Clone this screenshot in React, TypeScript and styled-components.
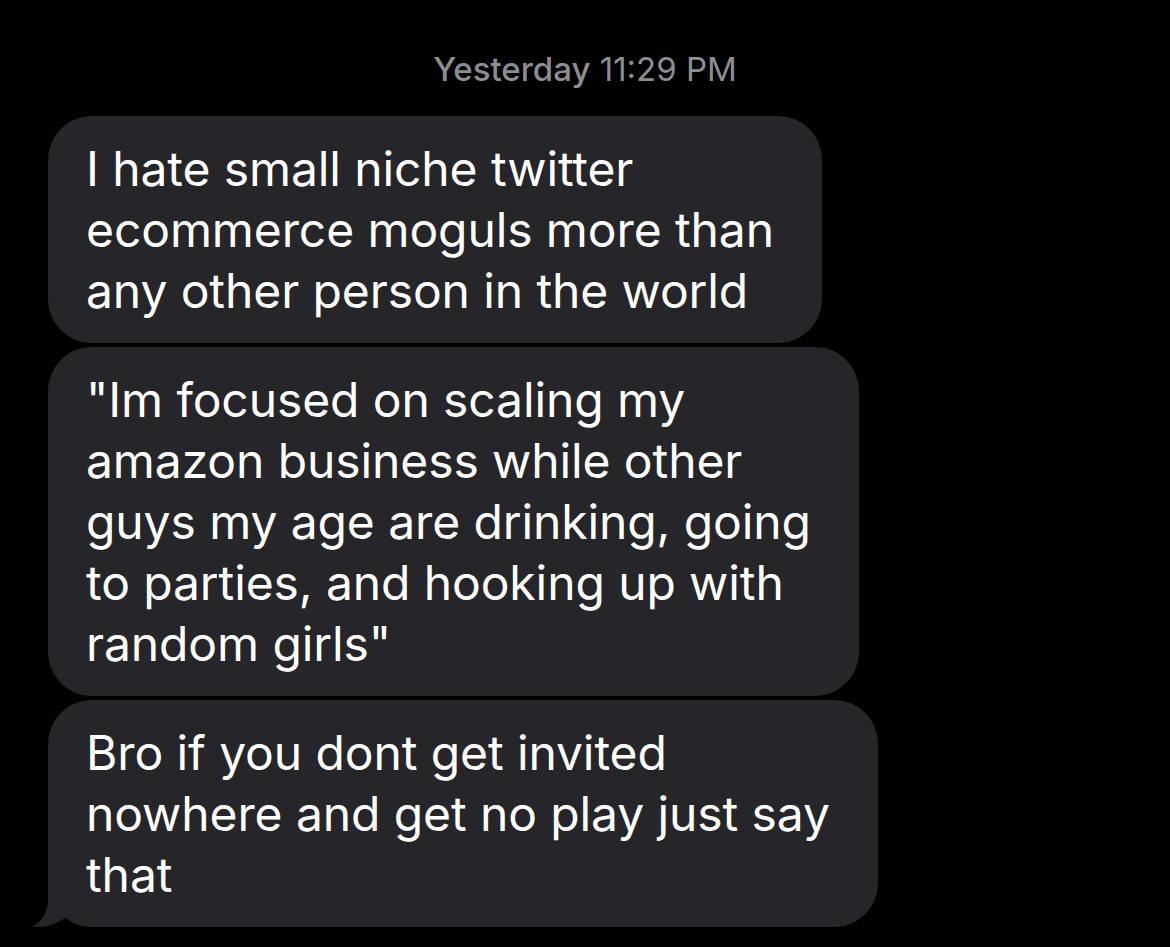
import React from 'react'
import styled, { createGlobalStyle } from 'styled-components'

const GlobalStyle = createGlobalStyle`
  html, body {
    margin: 0;
    padding: 0;
    background: #000;
  }
  body {
    font-family: Inter, "Noto Sans", "Liberation Sans", sans-serif;
    -webkit-font-smoothing: antialiased;
  }
`

const Screen = styled.div`
  width: 1170px;
  height: 947px;
  background: #000;
  overflow: hidden;
  display: flex;
  flex-direction: column;
`

const Timestamp = styled.div`
  align-self: center;
  margin: 49px 0 0;
  height: 40px;
  line-height: 40px;
  font-size: 33px;
  color: #8d8d93;

  & > b {
    font-weight: 500;
  }
`

const Thread = styled.div`
  display: flex;
  flex-direction: column;
  align-items: flex-start;
  gap: 4px;
  padding: 27px 0 0 48px;
`

const Bubble = styled.div`
  position: relative;
  background: #262529;
  color: #fff;
  border-radius: 44px;
  padding: 22px 48px 22px 38px;
  font-size: 48px;
  line-height: 61px;
  letter-spacing: -0.1px;
  white-space: pre-line;
  width: fit-content;
`

const Tail = styled.svg`
  position: absolute;
  left: -17px;
  bottom: 0;
  width: 40px;
  height: 40px;
`

type MessageProps = {
  text: string
  tail?: boolean
}

const Message = ({ text, tail }: MessageProps) => (
  <Bubble>
    {text}
    {tail && (
      <Tail viewBox="0 0 40 40">
        <path
          d="M17 0 L17 12 C17 26 10 35 1 40 C12 41 26 38 36 29 L40 0 Z"
          fill="#262529"
        />
      </Tail>
    )}
  </Bubble>
)

const messages = [
  'I hate small niche twitter\necommerce moguls more than\nany other person in the world',
  '"Im focused on scaling my\namazon business while other\nguys my age are drinking, going\nto parties, and hooking up with\nrandom girls"',
  'Bro if you dont get invited\nnowhere and get no play just say\nthat',
]

export default function App() {
  return (
    <Screen>
      <GlobalStyle />
      <Timestamp>
        <b>Yesterday</b> 11:29 PM
      </Timestamp>
      <Thread>
        {messages.map((m, i) => (
          <Message key={i} text={m} tail={i === messages.length - 1} />
        ))}
      </Thread>
    </Screen>
  )
}
